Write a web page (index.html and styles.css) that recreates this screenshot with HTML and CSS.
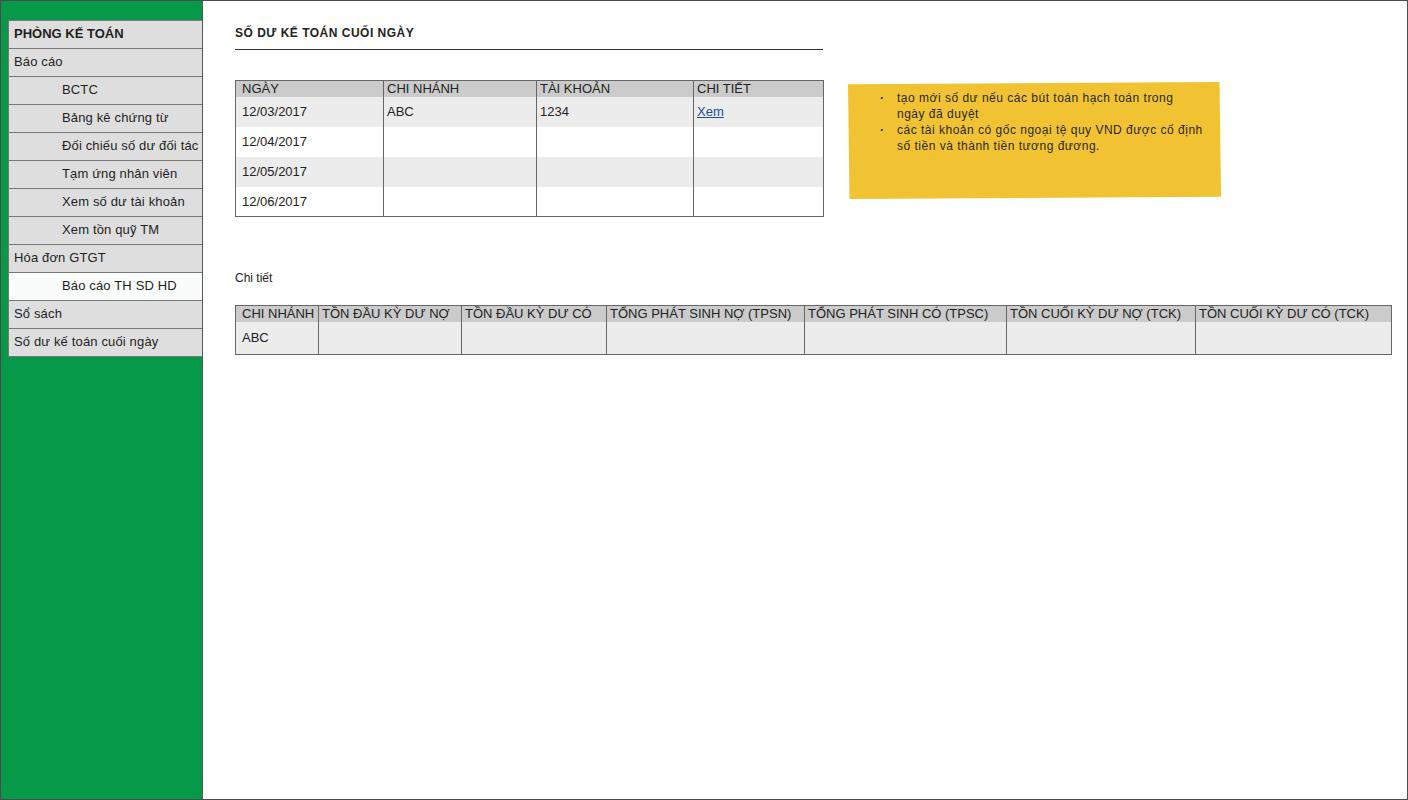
FILE: index.html
```html
<!DOCTYPE html>
<html lang="vi">
<head>
<meta charset="utf-8">
<title>Số dư kế toán cuối ngày</title>
<link rel="stylesheet" href="styles.css">
</head>
<body>
<div class="frame">
  <aside class="sidebar">
    <ul class="menu">
      <li class="item head">PHÒNG KẾ TOÁN</li>
      <li class="item">Báo cáo</li>
      <li class="item sub">BCTC</li>
      <li class="item sub">Bảng kê chứng từ</li>
      <li class="item sub">Đối chiếu số dư đối tác</li>
      <li class="item sub">Tạm ứng nhân viên</li>
      <li class="item sub">Xem số dư tài khoản</li>
      <li class="item sub">Xem tồn quỹ TM</li>
      <li class="item">Hóa đơn GTGT</li>
      <li class="item sub active">Báo cáo TH SD HD</li>
      <li class="item">Sổ sách</li>
      <li class="item">Số dư kế toán cuối ngày</li>
    </ul>
  </aside>
  <main class="main">
    <div class="top">
      <div class="left">
        <h1 class="title">SỐ DƯ KẾ TOÁN CUỐI NGÀY</h1>
        <table class="grid t1">
          <colgroup>
            <col class="c1"><col class="c2"><col class="c3"><col class="c4">
          </colgroup>
          <thead>
            <tr><th>NGÀY</th><th>CHI NHÁNH</th><th>TÀI KHOẢN</th><th>CHI TIẾT</th></tr>
          </thead>
          <tbody>
            <tr><td>12/03/2017</td><td>ABC</td><td>1234</td><td><a href="#" class="link">Xem</a></td></tr>
            <tr><td>12/04/2017</td><td></td><td></td><td></td></tr>
            <tr><td>12/05/2017</td><td></td><td></td><td></td></tr>
            <tr><td>12/06/2017</td><td></td><td></td><td></td></tr>
          </tbody>
        </table>
      </div>
      <div class="note">
        <ul>
          <li>tạo mới số dư nếu các bút toán hạch toán trong ngày đã duyệt</li>
          <li>các tài khoản có gốc ngoại tệ quy VND được cố định số tiền và thành tiền tương đương.</li>
        </ul>
      </div>
    </div>
    <p class="section">Chi tiết</p>
    <table class="grid t2">
      <colgroup>
        <col class="d1"><col class="d2"><col class="d3"><col class="d4"><col class="d5"><col class="d6"><col class="d7">
      </colgroup>
      <thead>
        <tr>
          <th>CHI NHÁNH</th><th>TỒN ĐẦU KỲ DƯ NỢ</th><th>TỒN ĐẦU KỲ DƯ CÓ</th><th>TỔNG PHÁT SINH NỢ (TPSN)</th><th>TỔNG PHÁT SINH CÓ (TPSC)</th><th>TỒN CUỐI KỲ DƯ NỢ (TCK)</th><th>TỒN CUỐI KỲ DƯ CÓ (TCK)</th>
        </tr>
      </thead>
      <tbody>
        <tr><td>ABC</td><td></td><td></td><td></td><td></td><td></td><td></td></tr>
      </tbody>
    </table>
  </main>
</div>
</body>
</html>
```

FILE: styles.css
```css
* { box-sizing: border-box; }
html, body { margin: 0; padding: 0; }
body {
  width: 1408px;
  height: 800px;
  font-family: "Liberation Sans", Arial, sans-serif;
  color: #222;
  background: #fff;
}
.frame {
  display: flex;
  width: 1408px;
  height: 800px;
  border: 1px solid #4a4a4a;
}
.sidebar {
  width: 202px;
  flex: none;
  background: #06994a;
  border-right: 1px solid #555;
  padding: 19px 0 0 7px;
}
.menu {
  list-style: none;
  margin: 0;
  padding: 0;
}
.item {
  height: 28px;
  line-height: 26px;
  background: #dedede;
  border: 1px solid #777;
  border-right: none;
  border-top: none;
  padding-left: 5px;
  font-size: 13px;
  letter-spacing: 0.15px;
  color: #1e1e1e;
  white-space: nowrap;
  overflow: hidden;
}
.item:first-child { border-top: 1px solid #777; height: 29px; line-height: 26px; }
.item.head { font-weight: bold; letter-spacing: 0; }
.item.sub { padding-left: 53px; }
.item.active { background: #f9fcfa; }
.main {
  flex: 1;
  padding: 0 0 0 32px;
}
.top {
  display: flex;
  align-items: flex-start;
}
.left { width: 588px; }
.title {
  margin: 0;
  padding-top: 25px;
  height: 49px;
  font-size: 12px;
  font-weight: bold;
  letter-spacing: 0.5px;
  color: #222;
  border-bottom: 1px solid #333;
}
.grid {
  border-collapse: collapse;
  border: 1px solid #666;
  font-size: 13px;
  table-layout: fixed;
}
.grid th {
  background: #cbcbcb;
  font-weight: normal;
  text-align: left;
  height: 16px;
  line-height: 15px;
  padding: 0 0 0 3px;
  border-left: 1px solid #666;
  white-space: nowrap;
  color: #222;
}
.grid td {
  border-left: 1px solid #666;
  padding: 0 0 0 3px;
  color: #222;
}
.grid th:first-child, .grid td:first-child { padding-left: 6px; }
.t1 { margin-top: 30px; width: 588px; }
.t1 td { height: 30px; }
.t1 tbody tr:nth-child(odd) td { background: #ececec; }
.t1 .c1 { width: 148px; }
.t1 .c2 { width: 153px; }
.t1 .c3 { width: 157px; }
.t1 .c4 { width: 130px; }
.link { color: #1b4f9c; text-decoration: underline; }
.note {
  margin: 81px 0 0 25px;
  width: 373px;
  height: 117px;
  background: #f1c232;
  clip-path: polygon(0 2%, 99.6% 0, 100% 98%, 0.4% 100%);
  padding: 8px 0 0 32px;
}
.note ul {
  margin: 0;
  padding: 0;
  width: 328px;
  list-style: none;
  font-size: 12px;
  letter-spacing: 0.5px;
  line-height: 16px;
  color: #2a2a2a;
}
.note li {
  position: relative;
  padding-left: 17px;
}
.note li:first-child { padding-right: 28px; }
.note li::before {
  content: "·";
  position: absolute;
  left: 0;
  top: 0;
  font-weight: bold;
}
.section {
  margin: 53px 0 0;
  font-size: 12px;
  line-height: 16px;
  color: #222;
}
.t2 { margin-top: 19px; width: 1156px; }
.t2 td { height: 33px; background: #ececec; vertical-align: top; padding-top: 8px; }
.t2 .d1 { width: 83px; }
.t2 .d2 { width: 143px; }
.t2 .d3 { width: 145px; }
.t2 .d4 { width: 198px; }
.t2 .d5 { width: 202px; }
.t2 .d6 { width: 189px; }
.t2 .d7 { width: 196px; }
```
